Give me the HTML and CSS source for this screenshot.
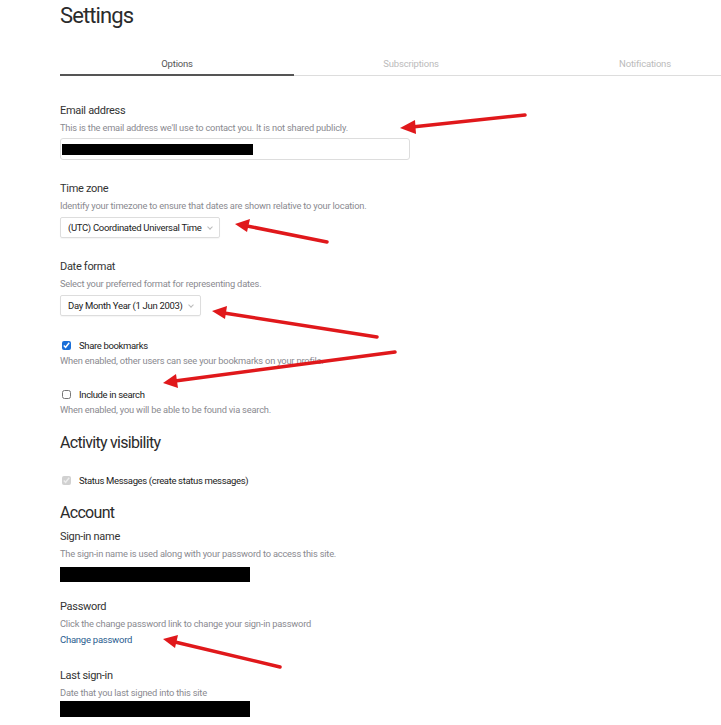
FILE: index.html
```html
<!DOCTYPE html>
<html lang="en">
<head>
    <meta charset="UTF-8">
    <title>Settings</title>
    <link rel="stylesheet" href="styles.css">
</head>
<body>
    <div class="page">
        <h1 class="page-title">Settings</h1>

        <div class="tabs">
            <div class="tab active">Options</div>
            <div class="tab">Subscriptions</div>
            <div class="tab">Notifications</div>
        </div>

        <div class="field first">
            <div class="label">Email address</div>
            <div class="help">This is the email address we'll use to contact you. It is not shared publicly.</div>
            <div class="text-input"><span class="redacted email"></span></div>
        </div>

        <div class="field">
            <div class="label">Time zone</div>
            <div class="help">Identify your timezone to ensure that dates are shown relative to your location.</div>
            <div class="select">(UTC) Coordinated Universal Time <span class="chevron"></span></div>
        </div>

        <div class="field">
            <div class="label">Date format</div>
            <div class="help">Select your preferred format for representing dates.</div>
            <div class="select">Day Month Year (1 Jun 2003) <span class="chevron"></span></div>
        </div>

        <div class="field check-field top">
            <label class="check-row"><input type="checkbox" checked> Share bookmarks</label>
            <div class="help tight">When enabled, other users can see your bookmarks on your profile.</div>
        </div>

        <div class="field check-field">
            <label class="check-row"><input type="checkbox"> Include in search</label>
            <div class="help tight">When enabled, you will be able to be found via search.</div>
        </div>

        <h2 class="section-title activity">Activity visibility</h2>

        <label class="check-row status"><input type="checkbox" checked disabled> Status Messages (create status messages)</label>

        <h2 class="section-title account">Account</h2>

        <div class="field signin">
            <div class="label">Sign-in name</div>
            <div class="help">The sign-in name is used along with your password to access this site.</div>
            <span class="redacted bar"></span>
        </div>

        <div class="field password">
            <div class="label">Password</div>
            <div class="help">Click the change password link to change your sign-in password</div>
            <a href="#" class="link">Change password</a>
        </div>

        <div class="field">
            <div class="label">Last sign-in</div>
            <div class="help">Date that you last signed into this site</div>
            <span class="redacted bar last"></span>
        </div>
    </div>

    <!-- annotation arrows drawn over the screenshot -->
    <svg class="arrows" width="721" height="725" viewBox="0 0 721 725">
        <g stroke="#e0181b" stroke-width="3.5" stroke-linecap="round" fill="#e0181b">
            <line x1="525" y1="115" x2="412" y2="127"/>
            <polygon stroke="none" points="400,128 415,120 416,134"/>
            <line x1="327" y1="242" x2="247" y2="226"/>
            <polygon stroke="none" points="235,224 250,219 247,232"/>
            <line x1="377" y1="337" x2="224" y2="313"/>
            <polygon stroke="none" points="212,311 227,306 225,319"/>
            <line x1="395" y1="352" x2="175" y2="381"/>
            <polygon stroke="none" points="163,383 176,374 178,388"/>
            <line x1="280" y1="667" x2="175" y2="642"/>
            <polygon stroke="none" points="163,639 178,635 175,648"/>
        </g>
    </svg>
</body>
</html>
```

FILE: styles.css
```css
body {
    margin: 0;
    font-family: Roboto, "Liberation Sans", sans-serif;
    color: #333;
    background-color: #fff;
    overflow: hidden;
}
.page {
    padding-left: 60px;
    overflow: hidden;
}
.page-title {
    margin: 0;
    font-size: 22px;
    font-weight: 400;
    line-height: 30px;
    padding-top: 1px;
    color: #2b2b2b;
    letter-spacing: -0.9px;
}

/* Tabs */
.tabs {
    display: flex;
    margin-top: 24px;
    border-bottom: 1px solid #ddd;
    width: 702px;
}
.tab {
    width: 234px;
    flex-shrink: 0;
    text-align: center;
    font-size: 9.5px;
    line-height: 17px;
    padding-bottom: 2px;
    color: #bbb;
    letter-spacing: -0.2px;
}
.tab.active {
    color: #555;
    border-bottom: 2px solid #555;
    margin-bottom: -1px;
}

/* Form fields */
.field {
    margin-top: 20px;
}
.field.first {
    margin-top: 26px;
}
.label {
    font-size: 11px;
    line-height: 17px;
    color: #333;
    letter-spacing: -0.3px;
}
.help {
    font-size: 9.3px;
    line-height: 17px;
    color: #8a8a90;
    letter-spacing: -0.2px;
}
.help.tight {
    line-height: 15px;
}
.text-input {
    margin-top: 2px;
    width: 348px;
    height: 20px;
    border: 1px solid #ddd;
    border-radius: 3px;
    display: flex;
    align-items: center;
}
.redacted {
    display: block;
    background-color: #000;
}
.redacted.email {
    width: 191px;
    height: 11px;
    margin-left: 1px;
}
.select {
    margin-top: 3px;
    display: inline-flex;
    align-items: center;
    height: 19px;
    padding: 0 7px 0 7px;
    border: 1px solid #ddd;
    border-radius: 2px;
    font-size: 9.5px;
    color: #222;
    letter-spacing: -0.3px;
    box-shadow: 0 1px 1px rgba(0,0,0,0.04);
}
.chevron {
    width: 3px;
    height: 3px;
    border-right: 1px solid #bbb;
    border-bottom: 1px solid #bbb;
    transform: rotate(45deg);
    margin-left: 6px;
    margin-top: -2px;
}

/* Checkboxes */
.check-field {
    margin-top: 19px;
}
.check-field.top {
    margin-top: 22px;
}
.check-row {
    display: flex;
    align-items: center;
    font-size: 9.5px;
    line-height: 15px;
    color: #222;
    letter-spacing: -0.35px;
}
.check-row input {
    width: 9px;
    height: 9px;
    margin: 0 8px 0 2px;
    accent-color: #1a6fd8;
}
.check-row.status {
    margin-top: 19px;
}

.section-title {
    margin: 0;
    font-size: 16px;
    font-weight: 400;
    line-height: 22px;
    color: #2b2b2b;
    letter-spacing: -0.7px;
}
.section-title.activity {
    margin-top: 15px;
}
.section-title.account {
    margin-top: 14px;
}
.field.signin {
    margin-top: 4px;
}
.field.password {
    margin-top: 16px;
}
.redacted.bar {
    width: 190px;
    height: 15px;
    margin-top: 5px;
}
.redacted.bar.last {
    height: 16px;
    margin-top: 0;
}
.link {
    display: block;
    font-size: 9.5px;
    line-height: 15px;
    color: #2a5d8f;
    text-decoration: none;
    letter-spacing: -0.25px;
}

.arrows {
    position: absolute;
    top: 0;
    left: 0;
    pointer-events: none;
}
```
